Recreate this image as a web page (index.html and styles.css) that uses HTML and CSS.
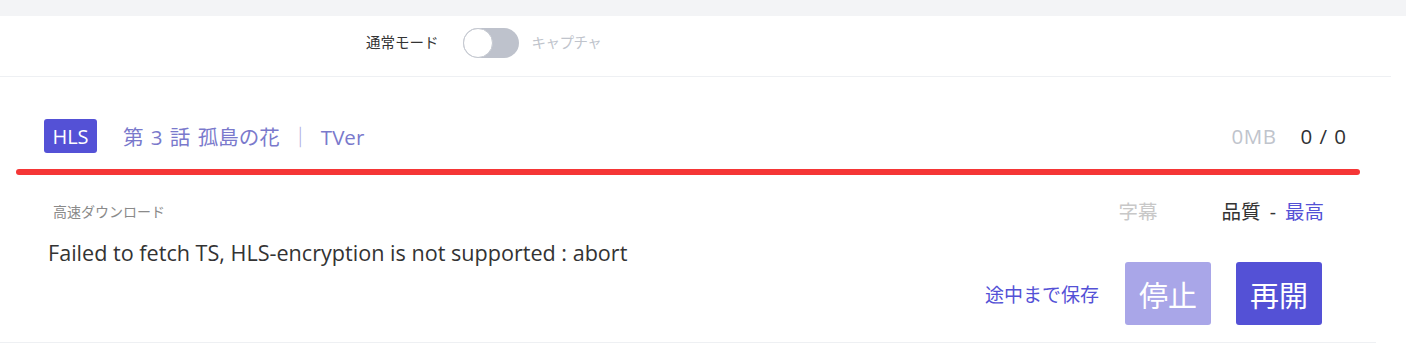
FILE: index.html
```html
<!DOCTYPE html>
<html lang="ja">
<head>
<meta charset="utf-8">
<title>Download</title>
<link rel="stylesheet" href="styles.css">
</head>
<body>
<div class="topbar"></div>
<div class="mode-row">
  <span class="mode-label">通常モード</span>
  <span class="toggle"><span class="knob"></span></span>
  <span class="mode-alt">キャプチャ</span>
</div>
<div class="item">
  <div class="head">
    <span class="badge">HLS</span>
    <span class="title">第 3 話 孤島の花 <span class="sep">｜</span> TVer</span>
    <span class="size">0MB</span>
    <span class="count">0 / 0</span>
  </div>
  <div class="bar"></div>
  <div class="sub">
    <span class="fast">高速ダウンロード</span>
    <span class="subs">字幕</span>
    <span class="quality">品質 - <span class="best">最高</span></span>
  </div>
  <div class="msg">Failed to fetch TS, HLS-encryption is not supported : abort</div>
  <div class="actions">
    <span class="save">途中まで保存</span>
    <button class="btn btn-stop">停止</button>
    <button class="btn btn-resume">再開</button>
  </div>
</div>
</body>
</html>
```

FILE: styles.css
```css
html, body {
  margin: 0;
  padding: 0;
  background: #ffffff;
  font-family: "Open Sans", "Noto Sans CJK JP", sans-serif;
  color: #333333;
}
.topbar {
  height: 16px;
  background: #f3f4f6;
}
.mode-row {
  width: 1391px;
  height: 61px;
  border-bottom: 1px solid #eef0f3;
  display: flex;
  align-items: flex-start;
  padding: 12px 0 0 366px;
  box-sizing: border-box;
}
.mode-label,
.mode-alt {
  font-size: 14.5px;
  line-height: 30px;
}
.mode-label {
  color: #333;
}
.toggle {
  margin-left: 24px;
  width: 56px;
  height: 30px;
  border-radius: 15px;
  background: #bec2cc;
  position: relative;
  box-sizing: border-box;
}
.knob {
  position: absolute;
  left: 0;
  top: 0;
  width: 30px;
  height: 30px;
  border-radius: 50%;
  background: #fff;
  border: 1px solid #c4c8d0;
  box-sizing: border-box;
}
.mode-alt {
  margin-left: 13px;
  color: #c0c4cc;
  letter-spacing: -0.5px;
}
.item {
  width: 1376px;
  padding: 0 16px 17px;
  box-sizing: border-box;
  border-bottom: 1px solid #eef0f3;
}
.head {
  display: flex;
  align-items: center;
  padding: 42px 14px 0 28px;
  height: 34px;
  box-sizing: content-box;
}
.badge {
  width: 53px;
  height: 34px;
  border-radius: 3px;
  background: #5451d6;
  color: #fff;
  font-size: 20px;
  display: flex;
  align-items: center;
  justify-content: center;
}
.title {
  margin-left: 26px;
  font-size: 20.5px;
  color: #7a79cc;
  flex: 1;
  word-spacing: 2px;
}
.sep {
  color: #a9a8de;
  margin: 0 3px;
}
.size {
  font-size: 20.5px;
  color: #c0c4cc;
  letter-spacing: 0.5px;
}
.count {
  margin-left: 24px;
  font-size: 20.5px;
  color: #303133;
  word-spacing: 2px;
}
.bar {
  margin-top: 16px;
  height: 6px;
  border-radius: 3px;
  background: #f53636;
}
.sub {
  display: flex;
  align-items: center;
  padding: 25px 36px 0 37px;
  line-height: 24px;
}
.fast {
  font-size: 14px;
  color: #8a8a8a;
  flex: 1;
}
.subs {
  font-size: 19.5px;
  color: #c8c8c8;
}
.quality {
  margin-left: 64px;
  font-size: 19.5px;
  color: #333;
  word-spacing: 4px;
}
.best {
  color: #5451d6;
}
.msg {
  padding: 18px 0 0 32px;
  font-size: 21.6px;
  line-height: 22px;
  color: #333;
}
.actions {
  display: flex;
  align-items: center;
  justify-content: flex-end;
  padding-right: 38px;
  margin-top: -2px;
}
.save {
  font-size: 19px;
  color: #5451d6;
  margin-right: 26px;
}
.btn {
  width: 86px;
  height: 63px;
  border: none;
  border-radius: 3px;
  color: #fff;
  font-family: inherit;
  font-size: 29px;
  padding: 0;
}
.btn-stop {
  background: #a9a6e8;
}
.btn-resume {
  margin-left: 25px;
  background: #5451d6;
}
```
